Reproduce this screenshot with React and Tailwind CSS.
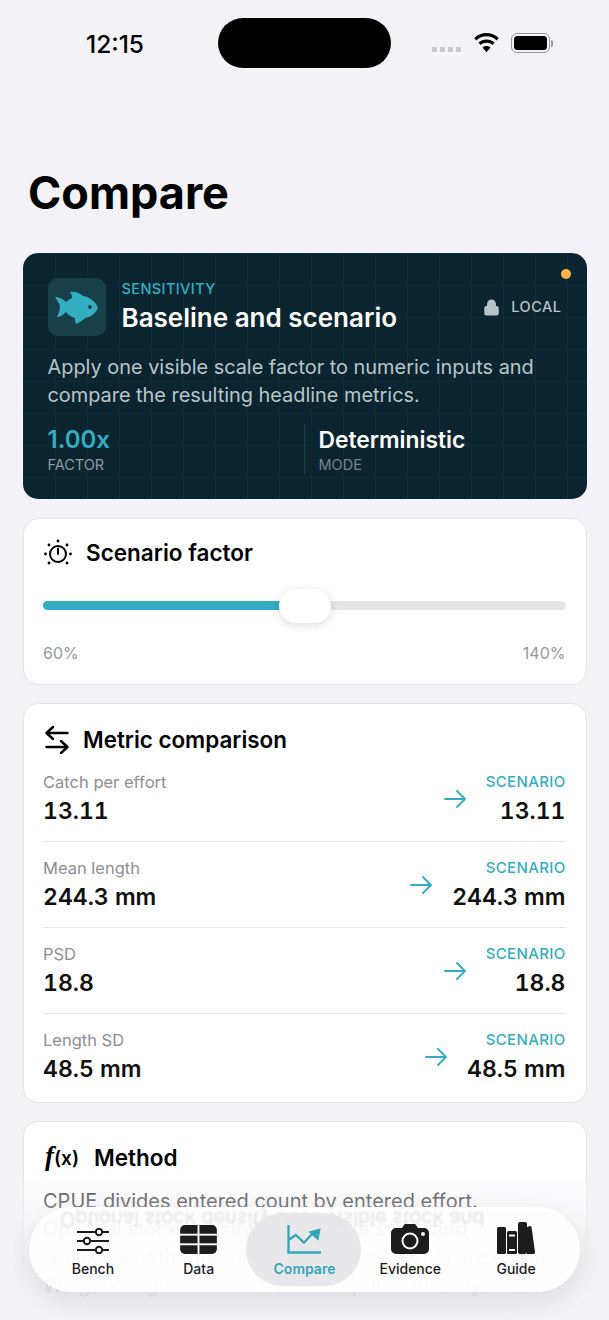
import { Lock } from 'lucide-react'

const METRICS = [
  { label: 'Catch per effort', value: '13.11' },
  { label: 'Mean length', value: '244.3 mm' },
  { label: 'PSD', value: '18.8' },
  { label: 'Length SD', value: '48.5 mm' },
]

const METHOD_LINES = [
  'CPUE divides entered count by entered effort.',
  'Optional stock density uses visible stock and',
  'Quality-length thresholds. Length moments are count',
  'Weight-length moments are computed directly.',
]

function Fish() {
  return (
    <svg width="43" height="33" viewBox="0 0 43 33" fill="#33adc1">
      <path d="M0 6 C4 6 8 8 11 11 C13 9 15 8 17 7 C17 4 16 2 15 1 C20 0 25 2 28 5 C35 6 41 11 43 17 C41 22 36 26 30 27 C27 30 24 32 21 33 C20 31 20 28 20 27 C16 26 13 24 11 21 C8 24 5 26 2 26 C4 22 5 18 5 15 C4 12 2 9 0 6 Z" />
      <circle cx="35" cy="16" r="1.8" fill="#0a2530" />
    </svg>
  )
}

function FactorIcon() {
  return (
    <svg className="ml-[1px]" width="28" height="28" viewBox="0 0 28 28" fill="none" stroke="black" strokeWidth="2">
      <circle cx="14" cy="15" r="8" />
      <path d="M14 15V9.500" strokeLinecap="round" />
      <g fill="black" stroke="none">
        <circle cx="14" cy="2" r="1.400" />
        <circle cx="1.500" cy="15" r="1.400" />
        <circle cx="26.500" cy="15" r="1.400" />
        <circle cx="5" cy="6" r="1.400" />
        <circle cx="23" cy="6" r="1.400" />
        <circle cx="5" cy="24" r="1.400" />
        <circle cx="23" cy="24" r="1.400" />
      </g>
    </svg>
  )
}

function SwapIcon() {
  return (
    <svg className="ml-[2px]" width="24" height="28" viewBox="0 0 24 28" fill="none" stroke="black" strokeWidth="2.400" strokeLinecap="round" strokeLinejoin="round">
      <path d="M8 1 L1.500 7 L8 13 M1.500 7H22.500" />
      <path d="M16 15 L22.500 21 L16 27 M22.500 21H1.500" />
    </svg>
  )
}

function ScenarioArrow() {
  return (
    <svg width="22" height="18" viewBox="0 0 22 18" fill="none" stroke="#33adc1" strokeWidth="1.800" strokeLinecap="round" strokeLinejoin="round">
      <path d="M1 9H21 M13 1 L21 9 L13 17" />
    </svg>
  )
}

function BenchIcon() {
  return (
    <svg width="32" height="26" viewBox="0 0 32 26" fill="none" stroke="#1c1c1e" strokeWidth="2">
      <path d="M0 4h32M0 13h32M0 22h32" />
      <circle cx="22" cy="4" r="3.200" fill="#fafafc" />
      <circle cx="10" cy="13" r="3.200" fill="#fafafc" />
      <circle cx="22" cy="22" r="3.200" fill="#fafafc" />
    </svg>
  )
}

function DataIcon() {
  return (
    <svg width="37" height="29" viewBox="0 0 38 30" fill="#1c1c1e">
      <path d="M5 0h13v9H0V5a5 5 0 0 1 5-5Z" />
      <path d="M20 0h13a5 5 0 0 1 5 5v4H20Z" />
      <rect x="0" y="11" width="18" height="8" />
      <rect x="20" y="11" width="18" height="8" />
      <path d="M0 21h18v9H5a5 5 0 0 1-5-5Z" />
      <path d="M20 21h18v4a5 5 0 0 1-5 5H20Z" />
    </svg>
  )
}

function CompareIcon() {
  return (
    <svg width="34" height="29" viewBox="0 0 34 29" fill="none" stroke="#33a5b8" strokeWidth="2.300">
      <path d="M1.500 0v27.500H34" />
      <path d="M1.500 15 L8.700 10 L17 17.700 L25.500 8.500" />
      <path d="M21.300 6.700 L33.700 3.300 L31.300 15.700 Z" fill="#33a5b8" stroke="none" />
    </svg>
  )
}

function CameraIcon() {
  return (
    <svg width="38" height="30" viewBox="0 0 38 30" fill="#1c1c1e">
      <path d="M5 4h6l2-3a2 2 0 0 1 2-1h8a2 2 0 0 1 2 1l2 3h6a5 5 0 0 1 5 5v16a5 5 0 0 1-5 5H5a5 5 0 0 1-5-5V9a5 5 0 0 1 5-5Z" />
      <circle cx="19" cy="17" r="7.500" fill="none" stroke="#fafafc" strokeWidth="2" />
      <circle cx="32" cy="10" r="2" fill="#fafafc" />
    </svg>
  )
}

function BooksIcon() {
  return (
    <svg width="38" height="32" viewBox="0 0 38 32" fill="#1c1c1e">
      <rect x="0" y="5" width="9" height="27" rx="1.500" />
      <rect x="10" y="9" width="10" height="23" rx="1.500" />
      <rect x="12" y="12.500" width="6" height="2" fill="#fafafc" />
      <rect x="12" y="27" width="6" height="2" fill="#fafafc" />
      <rect x="21" y="0" width="9" height="32" rx="2" />
      <path d="M30 5l3-1q1 0 1.500 1L38 30q.3 2-1.500 2H30Z" />
    </svg>
  )
}

function Tab({ label, active, children }) {
  return (
    <div className="relative flex h-[73px] flex-1 flex-col items-center justify-end pb-[8px]">
      {active && <div className="absolute inset-y-0 -right-[4px] -left-[6px] rounded-full bg-[#e6e6e9]/90" />}
      <div className="relative flex h-[36px] items-end justify-center">{children}</div>
      <span className={`relative mt-[6px] text-[14px] leading-[18px] ${active ? 'font-semibold text-[#33a5b8]' : 'font-medium text-[#1c1c1e]'}`}>{label}</span>
    </div>
  )
}

export default function App() {
  return (
    <div className="relative h-[1320px] w-[609px] overflow-hidden bg-[#f2f2f7] font-['Inter','Noto_Sans',sans-serif] text-black">
      {/* status bar */}
      <div className="flex h-[68px] items-start pt-[18px]">
        <div className="w-[218px] pt-[11px] pl-[86px] text-[24.500px] leading-[30px] font-medium">12:15</div>
        <div className="h-[50px] w-[173px] rounded-[25px] bg-black" />
        <div className="flex items-center pt-[15px] pl-[41px]">
          <div className="mt-[12px] flex gap-[3px]">
            {[0, 1, 2, 3].map(i => <div key={i} className="h-[5px] w-[5px] rounded-[1px] bg-[#c9c9cc]" />)}
          </div>
          <svg className="ml-[13px]" width="25" height="20" viewBox="0 0 25 20" fill="black">
            <path d="M12.500 0C17 0 21.300 1.800 24.700 5l-2 2.400C19.700 4.700 16.200 3.300 12.500 3.300S5.300 4.700 2.300 7.400L.3 5C3.700 1.800 8 0 12.500 0Z" />
            <path d="M12.500 6.500c3 0 5.800 1.100 8 3.200l-2.100 2.400c-1.600-1.500-3.700-2.300-5.900-2.300s-4.300.8-5.900 2.300L4.500 9.700c2.200-2.100 5-3.200 8-3.200Z" />
            <path d="M12.500 13c1.500 0 2.900.5 4 1.500l-4 4.800-4-4.800c1.100-1 2.500-1.500 4-1.500Z" />
          </svg>
          <div className="ml-[12px] flex items-center">
            <div className="h-[20px] w-[39px] rounded-[6px] border-[1.500px] border-[#98989c] p-[2px]">
              <div className="h-full w-full rounded-[3.500px] bg-black" />
            </div>
            <div className="ml-[1px] h-[7px] w-[2px] rounded-r-[2px] bg-[#98989c]" />
          </div>
        </div>
      </div>

      <h1 className="mt-[95px] pl-[28px] text-[45px] leading-[60px] font-bold">Compare</h1>

      <div className="mt-[30px] flex flex-col gap-[18px] px-[22.500px]">
        {/* hero */}
        <section className="relative mb-[1px] h-[246px] rounded-[15px] bg-[#0a2530] bg-[linear-gradient(rgba(255,255,255,0.028)_1px,transparent_1px),linear-gradient(90deg,rgba(255,255,255,0.028)_1px,transparent_1px)] bg-[size:32px_32px] px-[25px] pt-[25px]">
          <div className="absolute top-[16px] right-[16px] h-[10px] w-[10px] rounded-full bg-[#ffb44f]" />
          <div className="flex items-center">
            <div className="flex h-[58px] w-[58px] items-center justify-center rounded-[10px] bg-[#18404a]"><Fish /></div>
            <div className="ml-[16px] flex-1">
              <div className="text-[14.500px] leading-[20px] font-medium tracking-[0.4px] text-[#33adc1]">SENSITIVITY</div>
              <div className="mt-[2px] text-[26px] leading-[34px] font-semibold text-white">Baseline and scenario</div>
            </div>
            <div className="flex items-center gap-[11px] text-[14.500px] font-medium tracking-[0.5px] text-[#b9c3c7]">
              <Lock size={17} strokeWidth={2.500} fill="#b9c3c7" />
              LOCAL
            </div>
          </div>
          <p className="mt-[17px] text-[19.900px] leading-[28px] text-[#b8c5c9]">Apply one visible scale factor to numeric inputs and compare the resulting headline metrics.</p>
          <div className="mt-[15px] flex">
            <div className="w-[257px] border-r border-[#1d3f48]">
              <div className="text-[24px] leading-[32px] font-semibold text-[#33adc1]">1.00x</div>
              <div className="text-[14.500px] leading-[18px] text-[#8d9ca1]">FACTOR</div>
            </div>
            <div className="pl-[14px]">
              <div className="text-[22.800px] leading-[32px] font-semibold text-white">Deterministic</div>
              <div className="text-[14.500px] leading-[18px] text-[#74868c]">MODE</div>
            </div>
          </div>
        </section>

        {/* factor slider */}
        <section className="h-[167px] rounded-[15px] border border-[#e3e3e8] bg-white pt-[17px] pr-[20px] pl-[19.500px]">
          <div className="flex items-center">
            <FactorIcon />
            <h2 className="ml-[14px] text-[22.500px] leading-[34px] font-semibold">Scenario factor</h2>
          </div>
          <div className="relative mt-[31px] h-[9px] rounded-full bg-[#e5e5e7]">
            <div className="h-full w-[240px] rounded-l-full bg-[#33adc1]" />
            <div className="absolute top-[-12px] left-[236px] h-[34px] w-[52px] rounded-full bg-white shadow-[0_2px_10px_rgba(0,0,0,0.14)]" />
          </div>
          <div className="mt-[33px] flex justify-between text-[16px] leading-[20px] text-[#98989d]">
            <span>60%</span>
            <span>140%</span>
          </div>
        </section>

        {/* metrics */}
        <section className="h-[400px] rounded-[15px] border border-[#e3e3e8] bg-white pt-[19px] pr-[20px] pl-[19.500px]">
          <div className="flex items-center">
            <SwapIcon />
            <h2 className="ml-[14px] text-[22.400px] leading-[34px] font-semibold">Metric comparison</h2>
          </div>
          <div className="mt-[14px]">
            {METRICS.map((m, i) => (
              <div key={m.label} className={`flex items-center justify-between py-[15px] first:pt-0 ${i < 3 ? 'border-b border-[#e5e5e7]' : ''}`}>
                <div>
                  <div className="text-[16.500px] leading-[22px] text-[#8e8e93]">{m.label}</div>
                  <div className="mt-[3px] text-[23px] leading-[30px] font-semibold text-[#111] tabular-nums">{m.value}</div>
                </div>
                <div className="flex items-center gap-[20px]">
                  <ScenarioArrow />
                  <div className="text-right">
                    <div className="text-[15px] leading-[22px] font-medium tracking-[0.35px] text-[#33adc1]">SCENARIO</div>
                    <div className="mt-[3px] text-[23px] leading-[30px] font-semibold text-[#111] tabular-nums">{m.value}</div>
                  </div>
                </div>
              </div>
            ))}
          </div>
        </section>

        {/* method */}
        <section className="h-[300px] rounded-[15px] border border-[#e3e3e8] bg-white pt-[17px] pr-[20px] pl-[19.500px]">
          <div className="flex items-center">
            <span className="ml-[2px] font-['Liberation_Serif',serif] text-[27px] leading-[34px] font-bold italic">f<span className="font-['Inter',sans-serif] text-[19px] font-semibold not-italic">(x)</span></span>
            <h2 className="ml-[15px] text-[22.500px] leading-[34px] font-semibold">Method</h2>
          </div>
          <div className="mt-[11px] text-[20px] leading-[28px] text-[#3a3a3c]">
            {METHOD_LINES.map(line => <div key={line} className="whitespace-nowrap">{line}</div>)}
          </div>
        </section>
      </div>

      {/* scroll edge fade */}
      <div className="absolute right-0 bottom-0 left-0 h-[150px] bg-gradient-to-b from-transparent via-[#f2f2f7]/80 to-[#f2f2f7]" />

      {/* tab bar */}
      <nav className="absolute top-[1207px] left-[29px] flex h-[85px] w-[551px] items-center overflow-hidden rounded-full border border-white bg-white/90 px-[10px] shadow-[0_8px_28px_rgba(0,0,0,0.1)]">
        {/* refraction of the text passing behind the glass */}
        <div aria-hidden="true" className="absolute top-[-3px] left-[30px] -scale-y-100 text-[20px] leading-[28px] whitespace-nowrap text-[#3a3a3c]/15 blur-[1px]">{METHOD_LINES[1]}</div>
        <Tab label="Bench"><BenchIcon /></Tab>
        <Tab label="Data"><DataIcon /></Tab>
        <Tab label="Compare" active><CompareIcon /></Tab>
        <Tab label="Evidence"><CameraIcon /></Tab>
        <Tab label="Guide"><BooksIcon /></Tab>
      </nav>
    </div>
  )
}
